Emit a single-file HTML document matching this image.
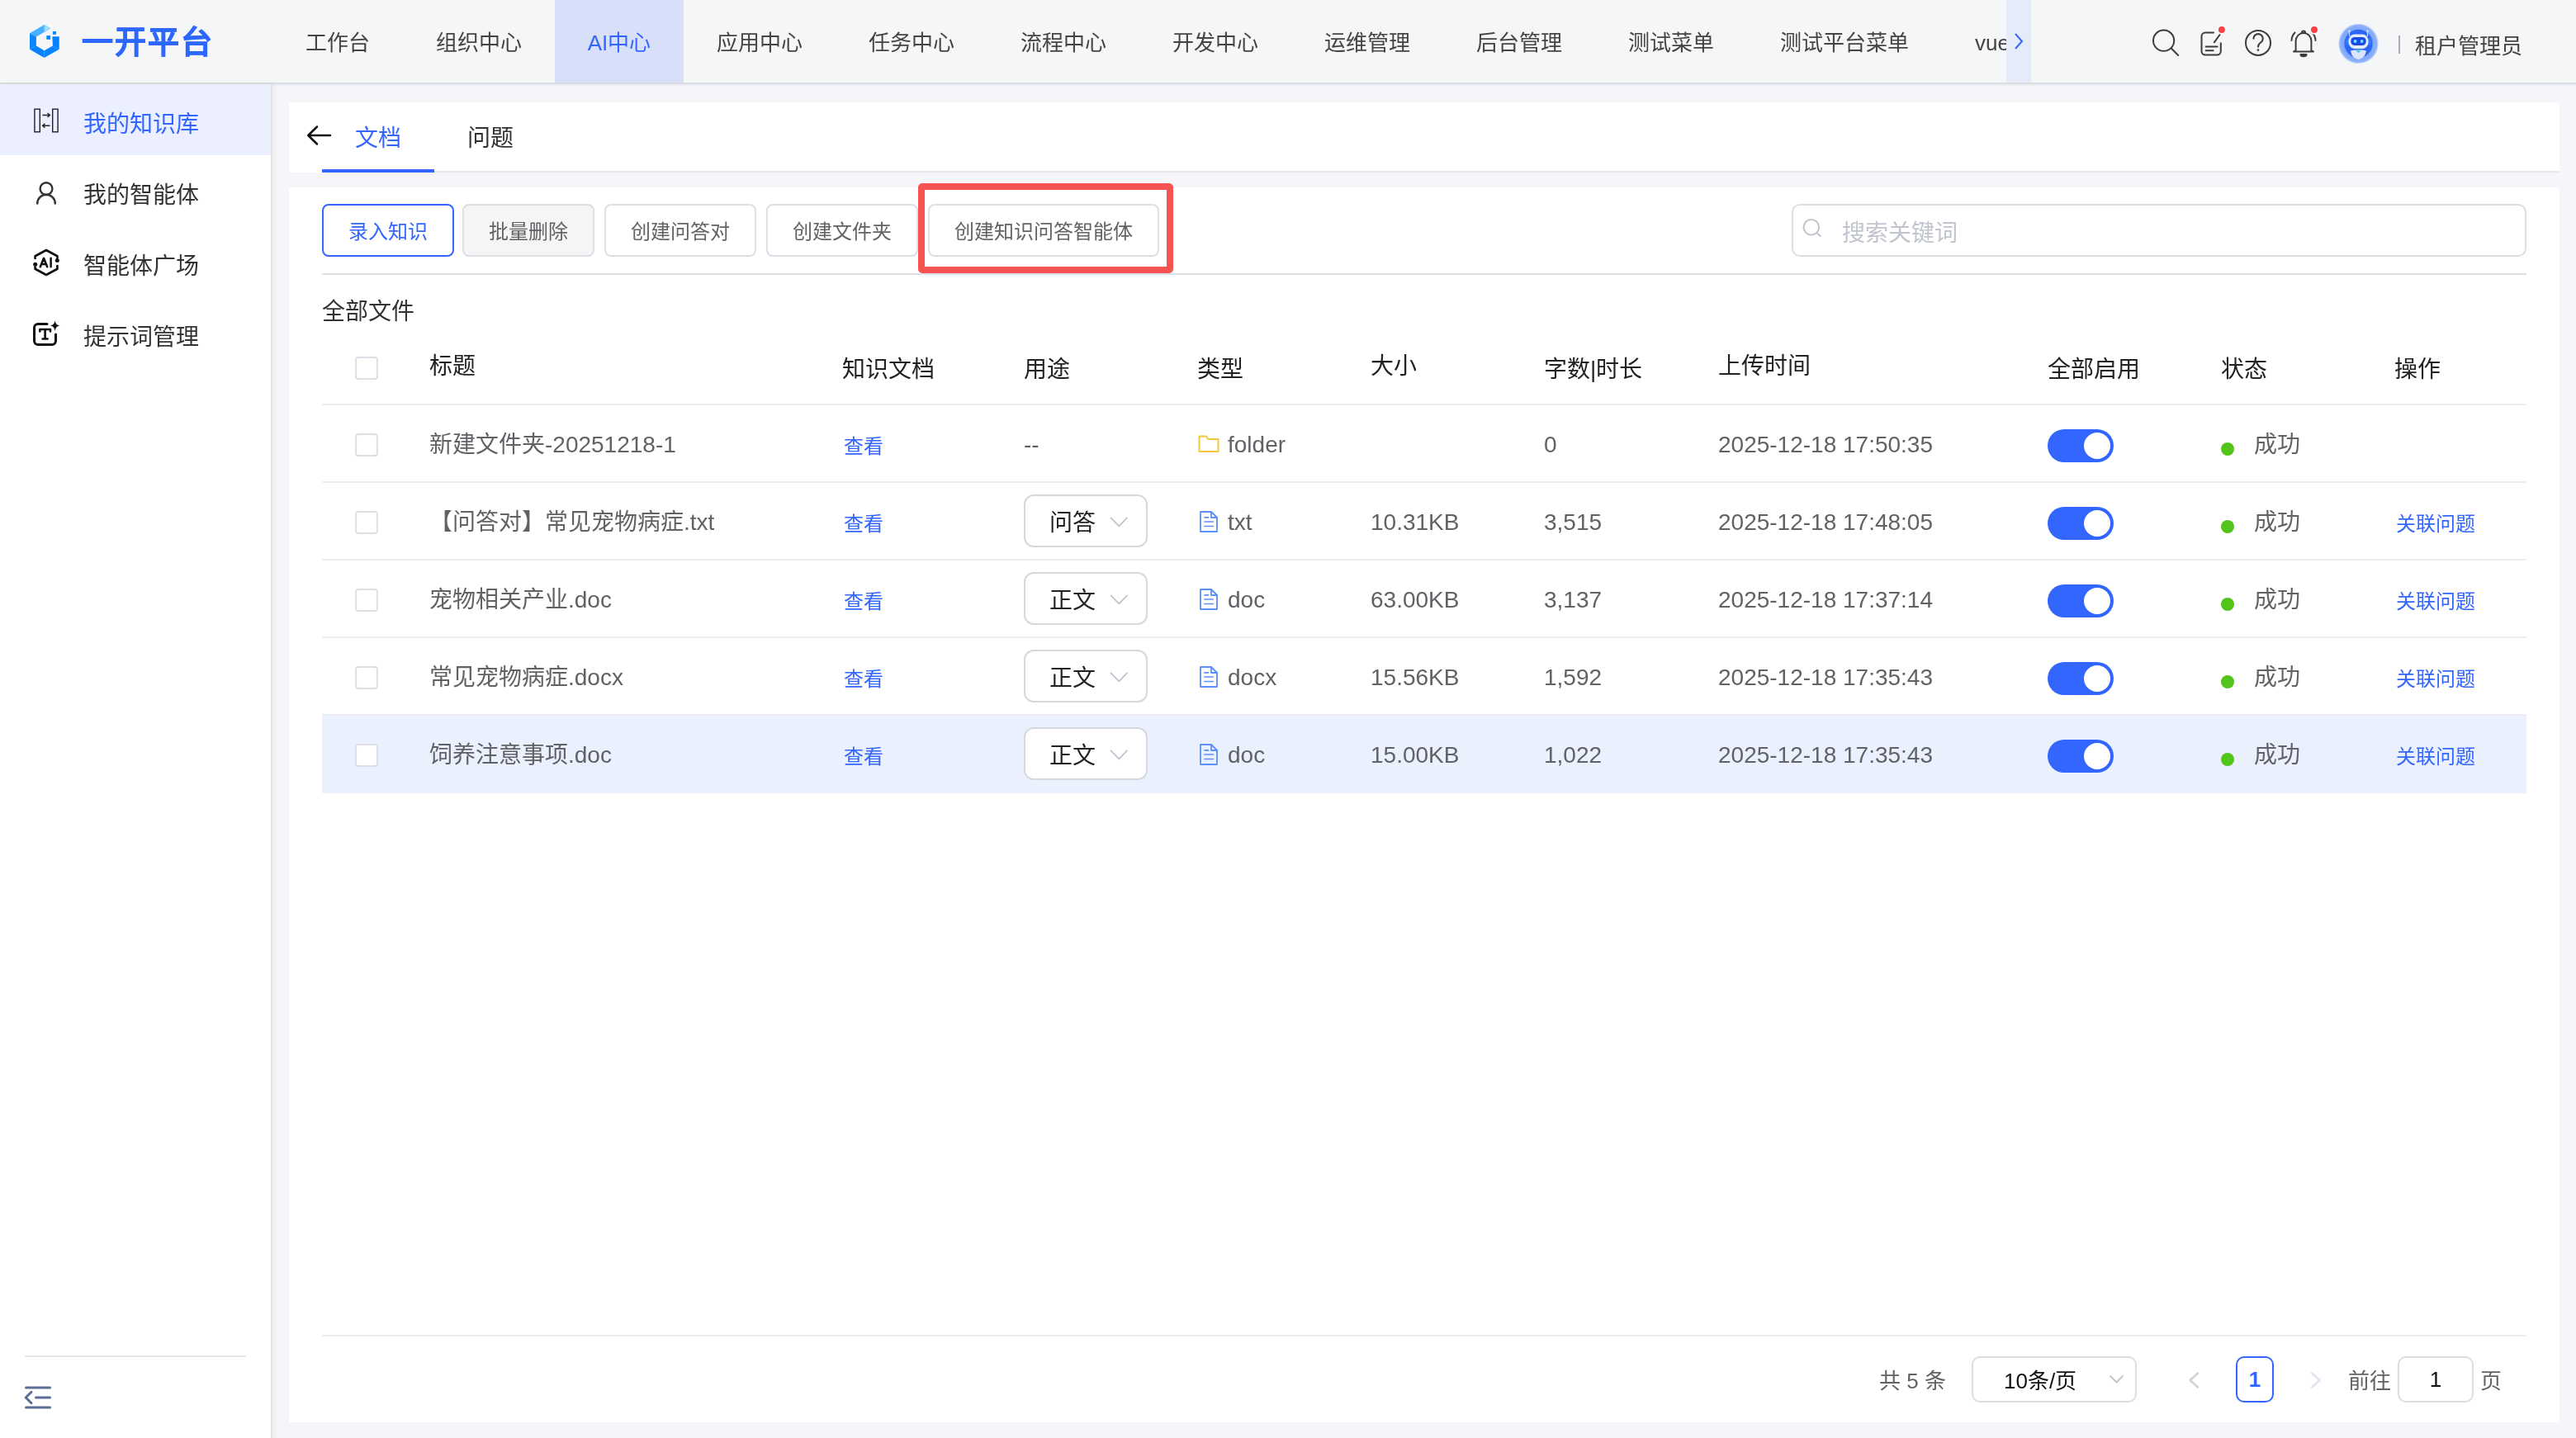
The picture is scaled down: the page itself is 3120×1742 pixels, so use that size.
<!DOCTYPE html>
<html lang="zh-CN">
<head>
<meta charset="utf-8">
<title>一开平台</title>
<style>
*{box-sizing:border-box;margin:0;padding:0}
html,body{width:3120px;height:1742px;overflow:hidden}
html{background:#f5f5fa}
body{will-change:transform}
body{position:relative;background:#f5f5fa;font-family:"Liberation Sans",sans-serif;color:#333;font-size:28px}
.abs{position:absolute}
.t{position:absolute;white-space:nowrap;line-height:1}
/* header */
#hdr{position:absolute;left:0;top:0;width:3120px;height:102px;background:#f5f6f8;border-bottom:2px solid #dbdcdc}
#brand{left:99px;top:32px;font-size:38px;font-weight:bold;color:#2d68fe;letter-spacing:2px;-webkit-text-stroke:0.7px #2d68fe}
.nav{position:absolute;top:0;height:100px;line-height:105px;overflow:hidden;font-size:26px;color:#444;text-align:center;white-space:nowrap}
.nav.on{background:#d8dff8;color:#3366ff}
#navarrow{left:2430px;top:0;width:30px;height:100px;background:#e6ebfa}
#user{left:2925px;top:43px;font-size:26px;color:#444}
/* sidebar */
#side{position:absolute;left:0;top:102px;width:330px;height:1640px;background:#fff;box-shadow:3px 0 8px rgba(0,0,0,.045);border-right:2px solid #e4e4e5}
.si{position:absolute;left:0;width:328px;height:86px}
.si.on{background:#ebefff}
.si .t{left:101px;top:35px;font-size:28px;color:#333}
.si.on .t{color:#3366ff}
.si svg{position:absolute}
/* panels */
.panel{position:absolute;left:350px;width:2750px;background:#fff}
.btn{position:absolute;top:247px;height:64px;line-height:64px;border:2px solid #dcdfe6;border-radius:8px;background:#fff;color:#606266;font-size:24px;text-align:center;white-space:nowrap}
/* table */
.th{position:absolute;font-size:28px;color:#222;white-space:nowrap;line-height:1}
.row{position:absolute;left:390px;width:2670px;height:94px;border-bottom:2px solid #ebeef5}
.row .c{position:absolute;top:0;height:92px;line-height:96px;font-size:28px;color:#606266;white-space:nowrap}
.row .lk{font-size:24px;color:#3366ff;line-height:100px}
.cb{position:absolute;width:28px;height:28px;border:2px solid #dcdfe6;border-radius:4px;background:#fff}
.sel{position:absolute;left:850px;top:14px;width:150px;height:64px;border:2px solid #d6d9dc;border-radius:12px;background:#fff}
.sel span{position:absolute;left:29px;top:0;line-height:66px;font-size:28px;color:#222}
.sw{position:absolute;left:2090px;top:29px;width:80px;height:40px;border-radius:20px;background:#3366ff}
.sw i{position:absolute;right:4px;top:4px;width:32px;height:32px;border-radius:50%;background:#fff}
.dot{position:absolute;left:2300px;top:45px;width:16px;height:16px;border-radius:50%;background:#52c41a}
</style>
</head>
<body>
<div id="hdr">
<svg class="abs" style="left:30px;top:26px" width="48" height="48" viewBox="30 26 48 48">
<polygon points="36,40.3 53.6,30 61.4,34.4 43.9,44.6" fill="#47b1ff"/>
<polygon points="53.6,30 61.4,34.4 53.6,38.9" fill="#9adbff"/>
<polygon points="36,40.3 43.9,44.6 43.9,55.6 36,59.7" fill="#0a86ff"/>
<polygon points="36,59.7 43.9,55.6 53.6,61.3 53.6,70" fill="#0780ff"/>
<polygon points="53.6,70 53.6,61.3 63.9,55.6 71.7,59.7" fill="#0a84ff"/>
<polygon points="63.9,55.6 71.7,59.7 71.7,44.3 63.4,44.3" fill="#0780ff"/>
<rect x="63.9" y="38" width="4" height="3.8" fill="#0a86ff"/>
<rect x="56.3" y="43.1" width="4.7" height="4.7" fill="#0a86ff"/>
</svg>
<div class="t" id="brand">一开平台</div>
<div class="nav" style="left:330px;width:158px">工作台</div>
<div class="nav" style="left:488px;width:184px">组织中心</div>
<div class="nav on" style="left:672px;width:156px">AI中心</div>
<div class="nav" style="left:828px;width:184px">应用中心</div>
<div class="nav" style="left:1012px;width:184px">任务中心</div>
<div class="nav" style="left:1196px;width:184px">流程中心</div>
<div class="nav" style="left:1380px;width:184px">开发中心</div>
<div class="nav" style="left:1564px;width:184px">运维管理</div>
<div class="nav" style="left:1748px;width:184px">后台管理</div>
<div class="nav" style="left:1932px;width:184px">测试菜单</div>
<div class="nav" style="left:2116px;width:236px">测试平台菜单</div>
<div class="nav" style="left:2392px;width:38px;overflow:hidden;text-align:left">vue-admin</div>
<div class="abs" id="navarrow"><svg class="abs" style="left:8px;top:39px" width="14" height="22" viewBox="0 0 14 22"><path d="M3 2 L11 11 L3 20" fill="none" stroke="#3366ff" stroke-width="2"/></svg></div>
<svg class="abs" style="left:2604px;top:32px" width="40" height="40" viewBox="2604 32 40 40" fill="none" stroke="#3c3c3c" stroke-width="2" stroke-linecap="round"><circle cx="2620.6" cy="49.2" r="12.6"/><path d="M2630 58.8 L2638.2 67"/></svg>
<svg class="abs" style="left:2660px;top:28px" width="40" height="44" viewBox="2660 28 40 44" fill="none" stroke="#3c3c3c" stroke-width="2" stroke-linecap="round" stroke-linejoin="round"><path d="M2681 39.6 H2671 a4.500 4.500 0 0 0 -4.500 4.500 V62 a4.500 4.500 0 0 0 4.500 4.500 H2685.300 a4.500 4.500 0 0 0 4.500 -4.500 V52.300"/><path d="M2688.6 42 L2681.8 51.3"/><path d="M2671.6 56.6 H2685.6"/><path d="M2671.6 61.2 H2680.6"/><circle cx="2690.9" cy="36.1" r="4.8" fill="#f5424b" stroke="#f5f6f8" stroke-width="1.6"/></svg>
<svg class="abs" style="left:2716px;top:32px" width="40" height="40" viewBox="2716 32 40 40" fill="none" stroke="#3c3c3c" stroke-width="2" stroke-linecap="round"><circle cx="2735" cy="51.9" r="15"/><path d="M2729.5 46.8 a5.6 5.6 0 1 1 8.6 4.7 c-2.2 1.5 -3.1 2.6 -3.1 5.2"/><circle cx="2735" cy="60.6" r="1.3" fill="#3a3a3a" stroke="none"/></svg>
<svg class="abs" style="left:2770px;top:28px" width="42" height="44" viewBox="2770 28 42 44" fill="none" stroke="#3c3c3c" stroke-width="2" stroke-linecap="round" stroke-linejoin="round"><path d="M2780.6 61 V49.5 a9.4 9.4 0 0 1 18.8 0 V61 l2.6 1.6 H2778 Z"/><path d="M2788 39.6 a2 2 0 0 1 4 0"/><path d="M2786.5 66 a3.5 2.2 0 0 0 7 0 Z" fill="#3a3a3a"/><path d="M2779.5 39.5 a14 14 0 0 0 -4 9.5"/><path d="M2800.5 39.5 a14 14 0 0 1 4 9.5"/><circle cx="2803" cy="36.1" r="4.8" fill="#f5424b" stroke="#f5f6f8" stroke-width="1.6"/></svg>
<svg class="abs" style="left:2830px;top:26px" width="54" height="54" viewBox="2830 26 54 54">
<defs><radialGradient id="ag" cx="50%" cy="50%" r="50%"><stop offset="0" stop-color="#1f58f2"/><stop offset="0.68" stop-color="#2f68f5"/><stop offset="0.72" stop-color="#7ea6f8"/><stop offset="0.92" stop-color="#8eb2fa"/><stop offset="1" stop-color="#c4d6fb" stop-opacity="0.4"/></radialGradient></defs>
<circle cx="2856.5" cy="52.9" r="24.4" fill="url(#ag)"/>
<path d="M2845.5 38 v6 M2867.5 38 v6" stroke="#cfdcf8" stroke-width="1.2"/>
<circle cx="2845.5" cy="37.6" r="1.2" fill="#dfe8fb"/><circle cx="2867.5" cy="37.6" r="1.2" fill="#dfe8fb"/>
<rect x="2841" y="46" width="5" height="9" rx="2" fill="#2f7cf6"/><rect x="2867" y="46" width="5" height="9" rx="2" fill="#2f7cf6"/>
<rect x="2844.5" y="41.5" width="24" height="17.5" rx="7.5" fill="#e4ebfb"/>
<rect x="2847.3" y="45" width="18.4" height="10" rx="4.6" fill="#1b48e6"/>
<circle cx="2852.6" cy="50" r="1.9" fill="#5ff0ff"/><circle cx="2860.6" cy="50" r="1.9" fill="#5ff0ff"/>
<path d="M2847 61.5 q9.5 -2.5 19 0 q-1.5 9 -9.5 10.5 q-8 -1.500 -9.5 -10.5 Z" fill="#dbe4fa"/>
<path d="M2853 61 h7 l-3.500 3 Z" fill="#35c8ff"/>
</svg>
<div class="abs" style="left:2905px;top:43px;width:2px;height:22px;background:#a9abb0"></div>
<div class="t" id="user">租户管理员</div>
</div>
<div class="abs" style="left:330px;top:102px;width:2790px;height:2px;background:#ebeef7"></div>
<div id="side">
<div class="si on" style="top:0"><svg style="left:40px;top:28px" width="32" height="32" viewBox="40 130 32 32" fill="none" stroke="#222" stroke-width="1.4"><rect x="41.9" y="132.200" width="6.400" height="27.600"/><rect x="63.7" y="132.200" width="6.400" height="27.600"/><path d="M51.500 139.500 H60.500 M57.500 137 L60.500 139.500 L57.500 142" /><path d="M60.500 152.300 H51.500 M54.500 149.800 L51.500 152.300 L54.500 154.800"/></svg><div class="t">我的知识库</div></div>
<div class="si" style="top:86px"><svg style="left:40px;top:30px" width="32" height="32" viewBox="40 218 32 32" fill="none" stroke="#333" stroke-width="2.4" stroke-linecap="round"><circle cx="56" cy="228.600" r="7.400"/><path d="M45.200 246.500 a10.800 10.800 0 0 1 21.600 0"/></svg><div class="t">我的智能体</div></div>
<div class="si" style="top:172px"><svg style="left:38px;top:26px" width="36" height="36" viewBox="38 300 36 36" fill="none" stroke="#111" stroke-width="2.700" stroke-linecap="round" stroke-linejoin="round"><path d="M42.600 313 V310.200 L56 303 L69.400 310.200 V312.600"/><path d="M69.400 322 V325.800 L56 333 L42.600 325.800 V323.500"/><circle cx="69.300" cy="315.600" r="2.500" fill="#111" stroke="none"/><circle cx="42.700" cy="320.200" r="2.500" fill="#111" stroke="none"/><path d="M48.800 323.300 L53 312.700 L57.200 323.300 M50.300 320 H55.700 M61.600 312.700 V323.300" stroke-width="2.500"/></svg><div class="t">智能体广场</div></div>
<div class="si" style="top:258px"><svg style="left:38px;top:26px" width="36" height="36" viewBox="38 386 36 36" fill="none" stroke="#111" stroke-width="3" stroke-linecap="round" stroke-linejoin="round"><path d="M57 392.500 H46 a4.500 4.500 0 0 0 -4.500 4.500 V413 a4.500 4.500 0 0 0 4.500 4.500 H63 a4.500 4.500 0 0 0 4.500 -4.500 V405"/><path d="M48.300 401.500 V399 H61 V401.500 M54.600 399 V410.500 M51.600 410.500 H57.600" stroke-width="2.600"/><path d="M66.600 388.300 Q67.300 393.600 72.200 394.600 Q67.300 395.600 66.600 400.900 Q65.900 395.600 61 394.600 Q65.900 393.600 66.600 388.300 Z" fill="#111" stroke="none"/></svg><div class="t">提示词管理</div></div>
<div class="abs" style="left:30px;top:1540px;width:268px;height:2px;background:#e6e6e8"></div>
<svg class="abs" style="left:28px;top:1576px" width="36" height="32" viewBox="28 1678 36 32" fill="none" stroke="#5a6d94" stroke-width="3" stroke-linecap="round" stroke-linejoin="round"><path d="M31.500 1681 H60.500 M43.500 1693 H60.500 M31.500 1705 H60.500 M38 1686.300 L31.200 1693 L38 1699.700"/></svg>
</div>
<div class="panel" id="p1" style="top:124px;height:85px">
<div class="abs" style="left:40px;top:83px;width:2710px;height:2px;background:#e4e7ed"></div>
<div class="abs" style="left:40px;top:81px;width:136px;height:4px;background:#3366ff"></div>
<svg class="abs" style="left:20px;top:26px" width="34" height="28" viewBox="370 150 34 28" fill="none" stroke="#111" stroke-width="2.500" stroke-linecap="round" stroke-linejoin="round"><path d="M400 164 H373.500 M384 153.500 L373.300 164 L384 174.500"/></svg>
<div class="t" style="left:80px;top:30px;font-size:28px;color:#3366ff">文档</div>
<div class="t" style="left:216px;top:30px;font-size:28px;color:#303133">问题</div>
</div>
<div class="panel" id="p2" style="top:227px;height:1496px"></div>
<div id="main">
<div class="btn" style="left:390px;width:160px;border-color:#3366ff;color:#3366ff">录入知识</div>
<div class="btn" style="left:560px;width:160px;background:#f5f5f5">批量删除</div>
<div class="btn" style="left:732px;width:184px;">创建问答对</div>
<div class="btn" style="left:928px;width:184px;">创建文件夹</div>
<div class="btn" style="left:1124px;width:280px;">创建知识问答智能体</div>
<div class="abs" style="left:1112px;top:222px;width:309px;height:109px;border:8px solid #f75353;border-radius:5px"></div>
<div class="abs" style="left:2170px;top:247px;width:890px;height:64px;border:2px solid #dcdfe0;border-radius:10px;background:#fff"><svg class="abs" style="left:10px;top:15px" width="28" height="28" viewBox="2182 264 28 28" fill="none" stroke="#c0c4cc" stroke-width="2" stroke-linecap="round"><circle cx="2193.800" cy="275.300" r="9.300"/><path d="M2200.700 282.200 L2204.600 286"/></svg><div class="t" style="left:59px;top:20px;font-size:28px;color:#c0c4cc">搜索关键词</div></div>
<div class="abs" style="left:390px;top:331px;width:2670px;height:2px;background:#dcdfe6"></div>
<div class="t" style="left:390px;top:364px;font-size:28px;color:#333">全部文件</div>
<div class="cb" style="left:430px;top:432px"></div>
<div class="th" style="left:520px;top:430px">标题</div>
<div class="th" style="left:1020px;top:434px">知识文档</div>
<div class="th" style="left:1240px;top:434px">用途</div>
<div class="th" style="left:1450px;top:434px">类型</div>
<div class="th" style="left:1660px;top:430px">大小</div>
<div class="th" style="left:1870px;top:434px">字数|时长</div>
<div class="th" style="left:2081px;top:430px">上传时间</div>
<div class="th" style="left:2480px;top:434px">全部启用</div>
<div class="th" style="left:2690px;top:434px">状态</div>
<div class="th" style="left:2900px;top:434px">操作</div>
<div class="abs" style="left:390px;top:489px;width:2670px;height:2px;background:#ebeef5"></div>
<div class="row" style="top:491px"><div class="cb" style="left:40px;top:34px"></div><div class="c" style="left:130px">新建文件夹-20251218-1</div><div class="c lk" style="left:632px">查看</div><div class="c" style="left:850px">--</div><svg class="abs" style="left:1060px;top:34px" width="30" height="26" viewBox="0 0 30 26" fill="none" stroke="#f5c63c" stroke-width="2" stroke-linejoin="round"><path d="M2.500 3.500 H10.500 L13.500 7 H25.500 V22 H2.500 Z"/></svg><div class="c" style="left:1097px">folder</div><div class="c" style="left:1480px">0</div><div class="c" style="left:1691px">2025-12-18 17:50:35</div><div class="sw"><i></i></div><div class="dot"></div><div class="c" style="left:2340px">成功</div></div>
<div class="row" style="top:585px"><div class="cb" style="left:40px;top:34px"></div><div class="c" style="left:130px">【问答对】常见宠物病症.txt</div><div class="c lk" style="left:632px">查看</div><div class="sel"><span>问答</span><svg class="abs" style="left:101px;top:24px" width="24" height="16" viewBox="0 0 24 16" fill="none" stroke="#c0c4cc" stroke-width="1.800" stroke-linecap="round" stroke-linejoin="round"><path d="M2.500 2.300 L12.300 12.300 L22 2.300"/></svg></div><svg class="abs" style="left:1062px;top:33px" width="24" height="28" viewBox="0 0 24 28" fill="none" stroke="#5b8ff9" stroke-width="1.800" stroke-linejoin="round" stroke-linecap="round"><path d="M2 2 H15 L22 9 V26 H2 Z"/><path d="M15 2 V9 H22"/><path d="M7 8.800 H11.500 M7 14 H17.300 M7 19.500 H17.300" stroke-width="1.700"/></svg><div class="c" style="left:1097px">txt</div><div class="c" style="left:1270px">10.31KB</div><div class="c" style="left:1480px">3,515</div><div class="c" style="left:1691px">2025-12-18 17:48:05</div><div class="sw"><i></i></div><div class="dot"></div><div class="c" style="left:2340px">成功</div><div class="c lk" style="left:2512px">关联问题</div></div>
<div class="row" style="top:679px"><div class="cb" style="left:40px;top:34px"></div><div class="c" style="left:130px">宠物相关产业.doc</div><div class="c lk" style="left:632px">查看</div><div class="sel"><span>正文</span><svg class="abs" style="left:101px;top:24px" width="24" height="16" viewBox="0 0 24 16" fill="none" stroke="#c0c4cc" stroke-width="1.800" stroke-linecap="round" stroke-linejoin="round"><path d="M2.500 2.300 L12.300 12.300 L22 2.300"/></svg></div><svg class="abs" style="left:1062px;top:33px" width="24" height="28" viewBox="0 0 24 28" fill="none" stroke="#5b8ff9" stroke-width="1.800" stroke-linejoin="round" stroke-linecap="round"><path d="M2 2 H15 L22 9 V26 H2 Z"/><path d="M15 2 V9 H22"/><path d="M7 8.800 H11.500 M7 14 H17.300 M7 19.500 H17.300" stroke-width="1.700"/></svg><div class="c" style="left:1097px">doc</div><div class="c" style="left:1270px">63.00KB</div><div class="c" style="left:1480px">3,137</div><div class="c" style="left:1691px">2025-12-18 17:37:14</div><div class="sw"><i></i></div><div class="dot"></div><div class="c" style="left:2340px">成功</div><div class="c lk" style="left:2512px">关联问题</div></div>
<div class="row" style="top:773px"><div class="cb" style="left:40px;top:34px"></div><div class="c" style="left:130px">常见宠物病症.docx</div><div class="c lk" style="left:632px">查看</div><div class="sel"><span>正文</span><svg class="abs" style="left:101px;top:24px" width="24" height="16" viewBox="0 0 24 16" fill="none" stroke="#c0c4cc" stroke-width="1.800" stroke-linecap="round" stroke-linejoin="round"><path d="M2.500 2.300 L12.300 12.300 L22 2.300"/></svg></div><svg class="abs" style="left:1062px;top:33px" width="24" height="28" viewBox="0 0 24 28" fill="none" stroke="#5b8ff9" stroke-width="1.800" stroke-linejoin="round" stroke-linecap="round"><path d="M2 2 H15 L22 9 V26 H2 Z"/><path d="M15 2 V9 H22"/><path d="M7 8.800 H11.500 M7 14 H17.300 M7 19.500 H17.300" stroke-width="1.700"/></svg><div class="c" style="left:1097px">docx</div><div class="c" style="left:1270px">15.56KB</div><div class="c" style="left:1480px">1,592</div><div class="c" style="left:1691px">2025-12-18 17:35:43</div><div class="sw"><i></i></div><div class="dot"></div><div class="c" style="left:2340px">成功</div><div class="c lk" style="left:2512px">关联问题</div></div>
<div class="row" style="top:867px;background:#ebf0fe;border-bottom-color:#ebf0fe"><div class="cb" style="left:40px;top:34px"></div><div class="c" style="left:130px">饲养注意事项.doc</div><div class="c lk" style="left:632px">查看</div><div class="sel"><span>正文</span><svg class="abs" style="left:101px;top:24px" width="24" height="16" viewBox="0 0 24 16" fill="none" stroke="#c0c4cc" stroke-width="1.800" stroke-linecap="round" stroke-linejoin="round"><path d="M2.500 2.300 L12.300 12.300 L22 2.300"/></svg></div><svg class="abs" style="left:1062px;top:33px" width="24" height="28" viewBox="0 0 24 28" fill="none" stroke="#5b8ff9" stroke-width="1.800" stroke-linejoin="round" stroke-linecap="round"><path d="M2 2 H15 L22 9 V26 H2 Z"/><path d="M15 2 V9 H22"/><path d="M7 8.800 H11.500 M7 14 H17.300 M7 19.500 H17.300" stroke-width="1.700"/></svg><div class="c" style="left:1097px">doc</div><div class="c" style="left:1270px">15.00KB</div><div class="c" style="left:1480px">1,022</div><div class="c" style="left:1691px">2025-12-18 17:35:43</div><div class="sw"><i></i></div><div class="dot"></div><div class="c" style="left:2340px">成功</div><div class="c lk" style="left:2512px">关联问题</div></div>
<div class="abs" style="left:390px;top:1617px;width:2670px;height:2px;background:#ebeef5"></div>
<div class="t" style="left:2276px;top:1660px;font-size:26px;color:#606266">共 5 条</div>
<div class="abs" style="left:2388px;top:1643px;width:200px;height:56px;border:2px solid #dcdfe0;border-radius:10px;background:#fff"><div class="t" style="left:37px;top:15px;font-size:26px;color:#111">10条/页</div><svg class="abs" style="left:163px;top:19px" width="22" height="15" viewBox="0 0 22 15" fill="none" stroke="#c0c4cc" stroke-width="1.800" stroke-linecap="round" stroke-linejoin="round"><path d="M3 3 L10.500 10.500 L18 3"/></svg></div>
<svg class="abs" style="left:2648px;top:1660px" width="18" height="24" viewBox="0 0 18 24" fill="none" stroke="#cdd1dc" stroke-width="2.400" stroke-linecap="round" stroke-linejoin="round"><path d="M14 3.500 L4.500 12 L14 20.500"/></svg>
<div class="abs" style="left:2708px;top:1643px;width:46px;height:56px;border:2px solid #3366ff;border-radius:10px;background:#fff;text-align:center;line-height:52px;font-size:26px;font-weight:bold;color:#3366ff">1</div>
<svg class="abs" style="left:2796px;top:1660px" width="18" height="24" viewBox="0 0 18 24" fill="none" stroke="#e1e4ec" stroke-width="2.400" stroke-linecap="round" stroke-linejoin="round"><path d="M4 3.500 L13.500 12 L4 20.500"/></svg>
<div class="t" style="left:2844px;top:1660px;font-size:26px;color:#606266">前往</div>
<div class="abs" style="left:2904px;top:1643px;width:92px;height:56px;border:2px solid #dcdfe0;border-radius:10px;background:#fff;text-align:center;line-height:52px;font-size:26px;color:#111">1</div>
<div class="t" style="left:3004px;top:1660px;font-size:26px;color:#606266">页</div>
</div>
</body>
</html>
